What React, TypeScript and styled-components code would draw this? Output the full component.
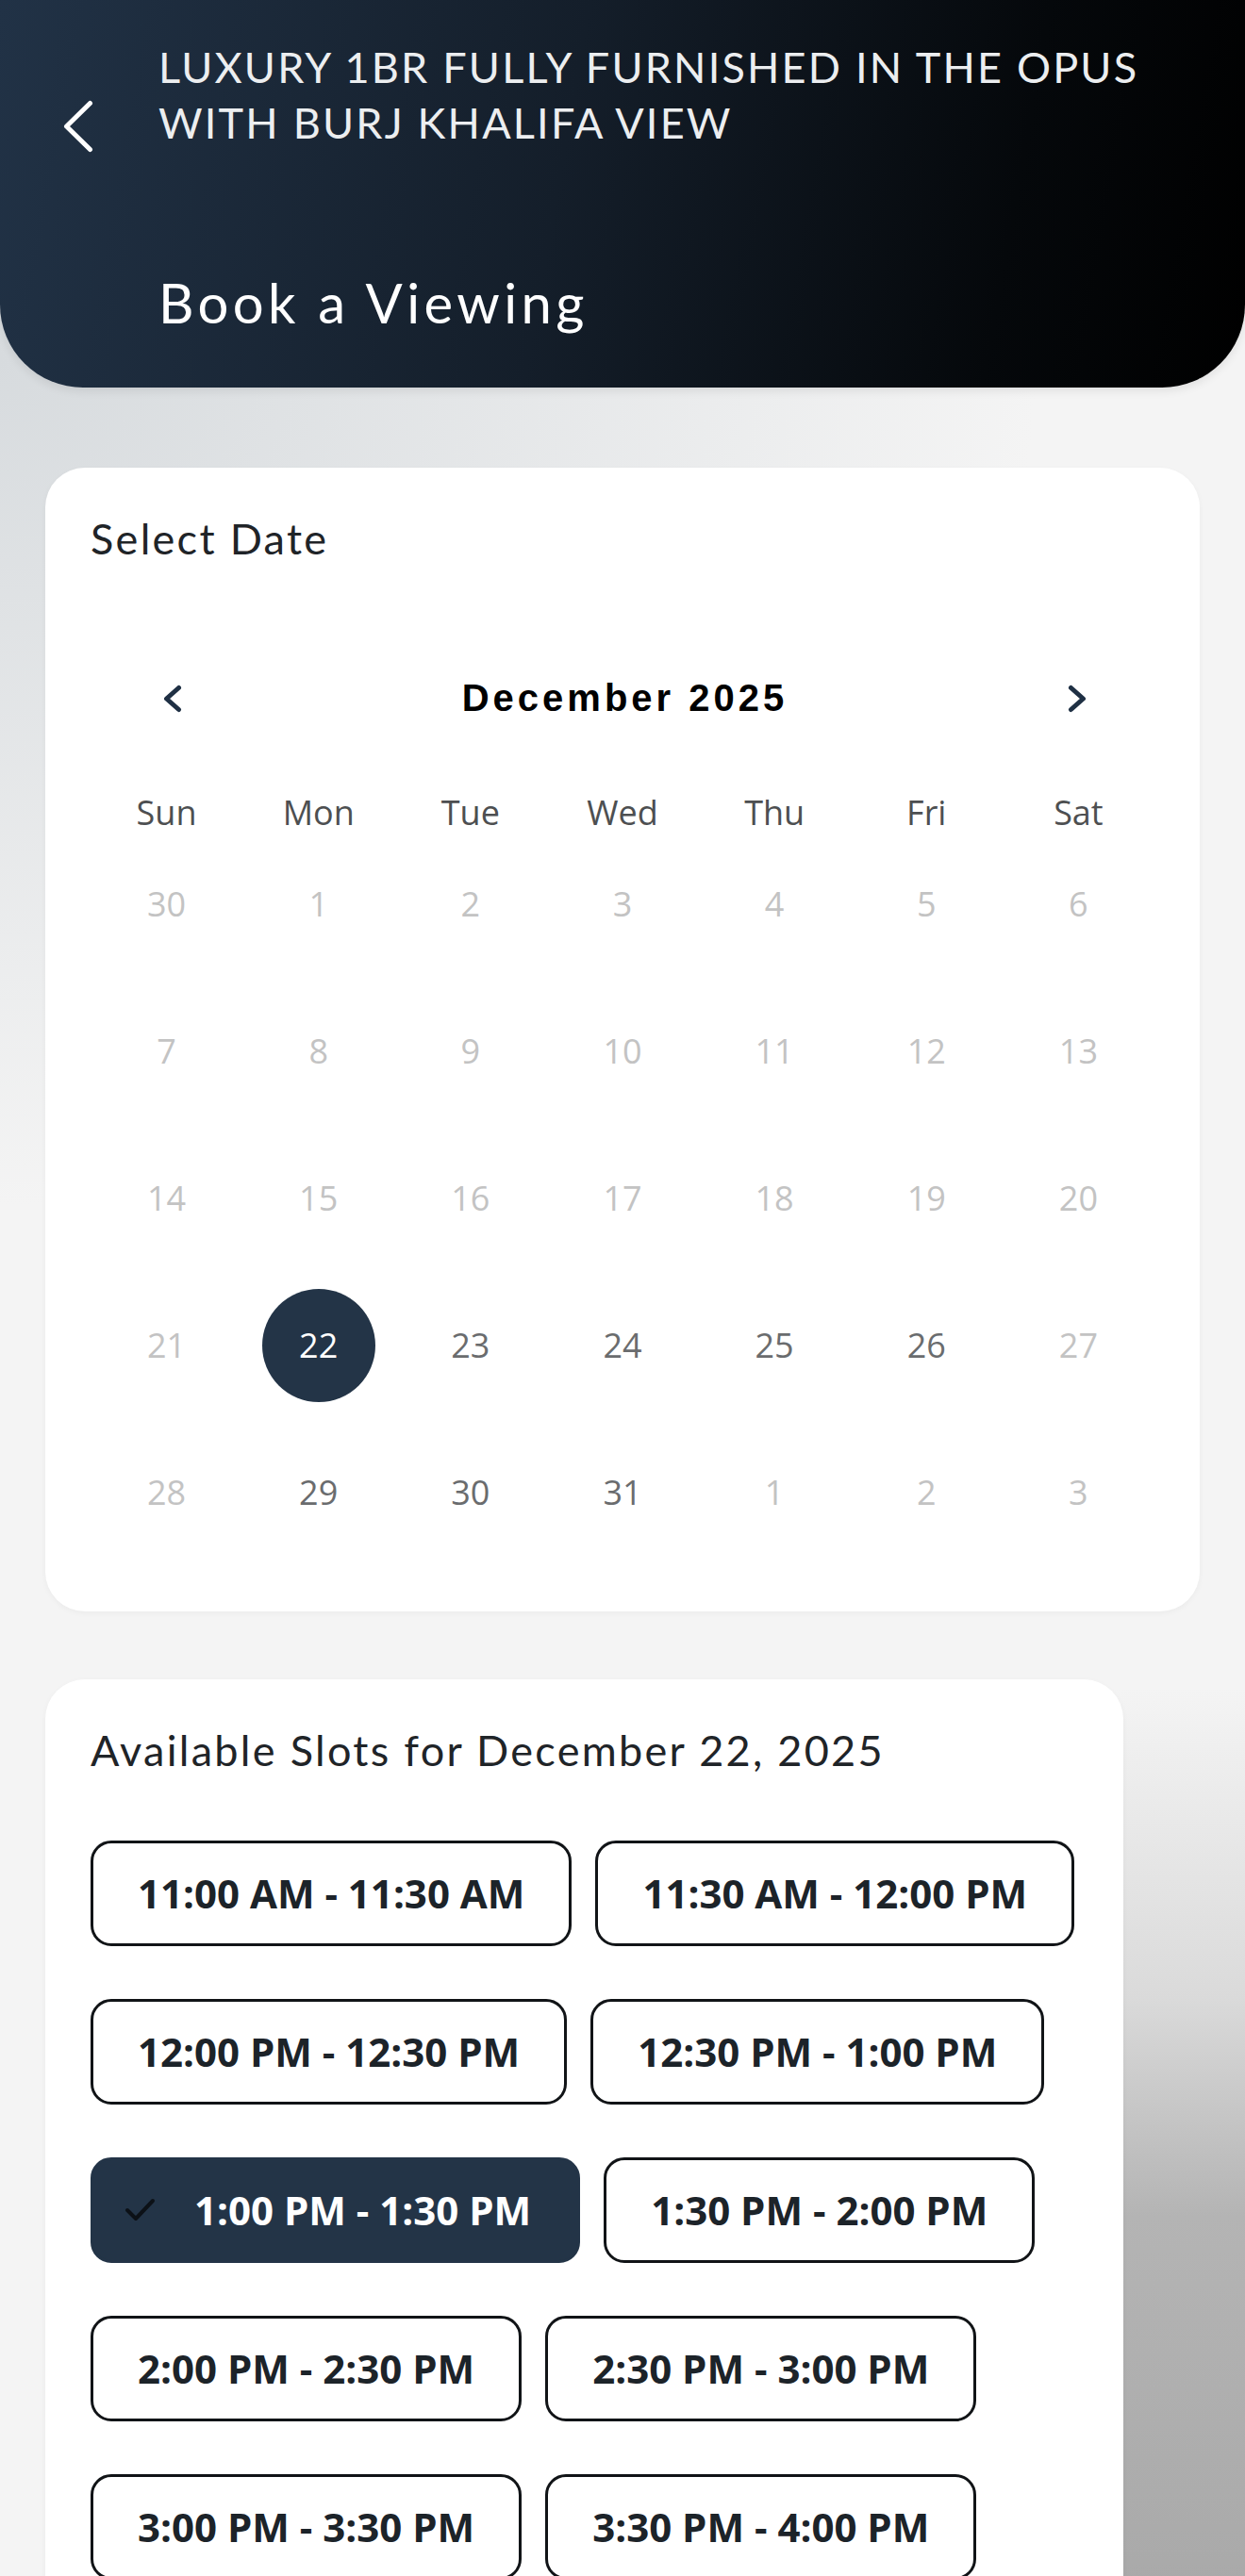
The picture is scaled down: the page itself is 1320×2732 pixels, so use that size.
import React from "react";
import styled, { createGlobalStyle } from "styled-components";

const GlobalStyle = createGlobalStyle`
  html, body {
    margin: 0;
    padding: 0;
    background: #f4f4f4;
    overflow: hidden;
  }
  * { box-sizing: border-box; }
`;

const Page = styled.div`
  width: 1320px;
  height: 2732px;
  overflow: hidden;
  display: flex;
  flex-direction: column;
  background-color: #f4f4f4;
  background-image:
    linear-gradient(to bottom, rgba(244,244,244,0) 0px, #dadada 330px, #b4b4b4 560px, #a8a8a8 1000px),
    radial-gradient(ellipse 1100px 900px at 0px 380px, #d7dbde 0%, rgba(244,244,244,0) 100%);
  background-position: right 0 top 1790px, 0 0;
  background-size: 140px 1000px, 100% 1400px;
  background-repeat: no-repeat;
  font-family: Lato, "Noto Sans", sans-serif;
`;

const Header = styled.header`
  display: grid;
  grid-template-columns: 101px 1fr;
  grid-template-rows: auto auto;
  padding: 42px 40px 55px 67px;
  border-radius: 0 0 88px 88px;
  background: linear-gradient(100deg, #213246 0%, #141e2a 45%, #05080b 80%, #000000 100%);
  box-shadow: 0 4px 10px rgba(0, 0, 0, 0.08);
`;

const BackButton = styled.button`
  align-self: start;
  margin-top: 64px;
  width: 32px;
  height: 56px;
  padding: 0;
  border: none;
  background: none;
  display: flex;
  align-items: center;
  justify-content: center;
  cursor: pointer;
`;

const Title = styled.h1`
  margin: 0;
  font-family: Lato, "Noto Sans", sans-serif;
  font-weight: 400;
  font-size: 45px;
  line-height: 59px;
  color: #eceef0;
  text-transform: uppercase;
  letter-spacing: 2.2px;
`;

const Heading = styled.h2`
  grid-column: 2;
  margin: 124px 0 0;
  font-family: Lato, "Noto Sans", sans-serif;
  font-weight: 400;
  font-size: 58px;
  line-height: 1.2;
  color: #ffffff;
  letter-spacing: 4.4px;
`;

const Content = styled.main`
  display: flex;
  flex-direction: column;
  align-items: flex-start;
  gap: 72px;
  padding: 85px 48px 0;
`;

const Card = styled.section<{ $width?: number }>`
  width: ${(p) => (p.$width ? `${p.$width}px` : "100%")};
  background: #ffffff;
  border-radius: 42px;
  padding: 48px;
  box-shadow: 0 2px 6px rgba(0, 0, 0, 0.04);
`;

const CardTitle = styled.h3`
  margin: 0;
  font-family: Lato, "Noto Sans", sans-serif;
  font-weight: 400;
  font-size: 45px;
  line-height: 1.2;
  color: #1f2428;
  letter-spacing: 2.3px;
`;

const MonthNav = styled.div`
  margin-top: 113px;
  height: 60px;
  display: flex;
  align-items: center;
  justify-content: space-between;
  padding: 0 66px 0 71px;
`;

const NavButton = styled.button`
  width: 32px;
  height: 40px;
  padding: 0;
  border: none;
  background: none;
  display: flex;
  align-items: center;
  justify-content: center;
  cursor: pointer;
`;

const MonthLabel = styled.div`
  font-family: "Liberation Sans", Arial, sans-serif;
  font-weight: 700;
  font-size: 40px;
  letter-spacing: 4px;
  color: #000000;
`;

const Grid = styled.div`
  display: grid;
  grid-template-columns: repeat(7, 1fr);
`;

const WeekRow = styled(Grid)`
  margin-top: 66px;
  height: 44px;
`;

const WeekDay = styled.div`
  display: flex;
  align-items: center;
  justify-content: center;
  font-family: "Open Sans", sans-serif;
  font-size: 36px;
  color: #4d4f51;
`;

const DayCell = styled.div`
  height: 156px;
  display: flex;
  align-items: center;
  justify-content: center;
`;

const Day = styled.div<{ $muted?: boolean; $selected?: boolean }>`
  width: 120px;
  height: 120px;
  border-radius: 50%;
  display: flex;
  align-items: center;
  justify-content: center;
  font-family: "Open Sans", sans-serif;
  font-size: 36px;
  color: ${(p) => (p.$selected ? "#ffffff" : p.$muted ? "#c3c3c3" : "#6a6c6e")};
  background: ${(p) => (p.$selected ? "#233447" : "transparent")};
`;

const SlotsTitle = styled(CardTitle)``;

const SlotList = styled.div`
  margin-top: 69px;
  display: flex;
  flex-wrap: wrap;
  column-gap: 25px;
  row-gap: 56px;
`;

const Slot = styled.button<{ $selected?: boolean }>`
  height: 112px;
  display: flex;
  align-items: center;
  gap: 41px;
  padding: ${(p) => (p.$selected ? "0 49px 0 33px" : "0 47px")};
  border: 3px solid ${(p) => (p.$selected ? "#233447" : "#111417")};
  border-radius: 22px;
  background: ${(p) => (p.$selected ? "#233447" : "#ffffff")};
  color: ${(p) => (p.$selected ? "#ffffff" : "#1c2329")};
  font-family: "Open Sans", sans-serif;
  font-weight: 700;
  font-size: 42px;
  white-space: nowrap;
  cursor: pointer;
`;

const ChevronLeft = ({ color, w, h, sw }: { color: string; w: number; h: number; sw: number }) => (
  <svg width={w} height={h} viewBox={`0 0 ${w} ${h}`} fill="none">
    <polyline
      points={`${w - sw / 2 - 1},${sw / 2 + 1} ${sw / 2 + 1},${h / 2} ${w - sw / 2 - 1},${h - sw / 2 - 1}`}
      stroke={color}
      strokeWidth={sw}
      strokeLinecap="round"
      strokeLinejoin="round"
    />
  </svg>
);

const ChevronRight = ({ color, w, h, sw }: { color: string; w: number; h: number; sw: number }) => (
  <svg width={w} height={h} viewBox={`0 0 ${w} ${h}`} fill="none">
    <polyline
      points={`${sw / 2 + 1},${sw / 2 + 1} ${w - sw / 2 - 1},${h / 2} ${sw / 2 + 1},${h - sw / 2 - 1}`}
      stroke={color}
      strokeWidth={sw}
      strokeLinecap="round"
      strokeLinejoin="round"
    />
  </svg>
);

const Check = () => (
  <svg width="33" height="26" viewBox="0 0 33 26" fill="none">
    <polyline points="3,13 12,22 30,3" stroke="#0c1117" strokeWidth="4" strokeLinecap="round" strokeLinejoin="round" />
  </svg>
);

type D = { n: number; muted?: boolean; selected?: boolean };

const weeks: D[][] = [
  [30, 1, 2, 3, 4, 5, 6].map((n) => ({ n, muted: true })),
  [7, 8, 9, 10, 11, 12, 13].map((n) => ({ n, muted: true })),
  [14, 15, 16, 17, 18, 19, 20].map((n) => ({ n, muted: true })),
  [
    { n: 21, muted: true },
    { n: 22, selected: true },
    { n: 23 },
    { n: 24 },
    { n: 25 },
    { n: 26 },
    { n: 27, muted: true },
  ],
  [
    { n: 28, muted: true },
    { n: 29 },
    { n: 30 },
    { n: 31 },
    { n: 1, muted: true },
    { n: 2, muted: true },
    { n: 3, muted: true },
  ],
];

const slots = [
  "11:00 AM - 11:30 AM",
  "11:30 AM - 12:00 PM",
  "12:00 PM - 12:30 PM",
  "12:30 PM - 1:00 PM",
  "1:00 PM - 1:30 PM",
  "1:30 PM - 2:00 PM",
  "2:00 PM - 2:30 PM",
  "2:30 PM - 3:00 PM",
  "3:00 PM - 3:30 PM",
  "3:30 PM - 4:00 PM",
  "4:00 PM - 4:30 PM",
  "4:30 PM - 5:00 PM",
];

const selectedSlot = "1:00 PM - 1:30 PM";

export default function App() {
  return (
    <Page>
      <GlobalStyle />
      <Header>
        <BackButton aria-label="Back">
          <ChevronLeft color="#ffffff" w={32} h={56} sw={5} />
        </BackButton>
        <Title>
          Luxury 1BR Fully Furnished in The Opus
          <br />
          with Burj Khalifa View
        </Title>
        <Heading>Book a Viewing</Heading>
      </Header>
      <Content>
        <Card>
          <CardTitle>Select Date</CardTitle>
          <MonthNav>
            <NavButton aria-label="Previous month">
              <ChevronLeft color="#1f3044" w={20} h={30} sw={5} />
            </NavButton>
            <MonthLabel>December 2025</MonthLabel>
            <NavButton aria-label="Next month">
              <ChevronRight color="#1f3044" w={20} h={30} sw={5} />
            </NavButton>
          </MonthNav>
          <WeekRow>
            {["Sun", "Mon", "Tue", "Wed", "Thu", "Fri", "Sat"].map((d) => (
              <WeekDay key={d}>{d}</WeekDay>
            ))}
          </WeekRow>
          <Grid>
            {weeks.flat().map((d, i) => (
              <DayCell key={i}>
                <Day $muted={d.muted} $selected={d.selected}>
                  {d.n}
                </Day>
              </DayCell>
            ))}
          </Grid>
        </Card>
        <Card $width={1143}>
          <SlotsTitle>Available Slots for December 22, 2025</SlotsTitle>
          <SlotList>
            {slots.map((s) => (
              <Slot key={s} $selected={s === selectedSlot}>
                {s === selectedSlot && <Check />}
                {s}
              </Slot>
            ))}
          </SlotList>
        </Card>
      </Content>
    </Page>
  );
}
